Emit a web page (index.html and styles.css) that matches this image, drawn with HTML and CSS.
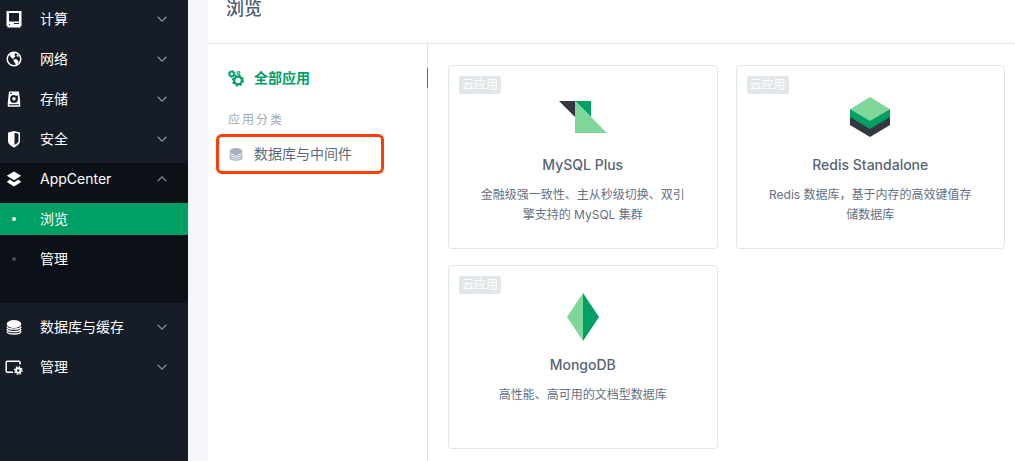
FILE: index.html
```html
<!DOCTYPE html>
<html lang="zh-CN">
<head>
    <meta charset="UTF-8">
    <meta name="viewport" content="width=device-width, initial-scale=1.0">
    <title>浏览 - AppCenter</title>
    <link rel="stylesheet" href="styles.css">
</head>
<body>
    <div class="layout">
        <nav class="sidebar">
            <a class="menu-item" href="#">
                <svg class="menu-icon" viewBox="0 0 16 16"><path fill="currentColor" fill-rule="evenodd" d="M.5 0h15v15h-1v1.500h-13V15h-1zM3 2v8.500h10V2zM3 13v1h1v-1zM8 12v1h5v-1z"/></svg>
                <span>计算</span>
                <svg class="arrow" viewBox="0 0 10 6"><path d="M.7.800L5 5.100 9.300.800"/></svg>
            </a>
            <a class="menu-item" href="#">
                <svg class="menu-icon" viewBox="0 0 16 16"><circle cx="8" cy="8" r="6.800" fill="none" stroke="currentColor" stroke-width="1.500"/><path fill="currentColor" d="M3.500 4l3-2.500 2.500.5-.5 2L9.500 5.500 8 6.500l-.5 1.500-2-1-1-1.500zM7.500 8.500l2.500-.5 2 1.500.5 1.500-2 3.500L9 12 7.500 10zM11 3l2 2-1 1-1.500-1z"/></svg>
                <span>网络</span>
                <svg class="arrow" viewBox="0 0 10 6"><path d="M.7.800L5 5.100 9.300.800"/></svg>
            </a>
            <a class="menu-item" href="#">
                <svg class="menu-icon" viewBox="0 0 16 16"><path fill="currentColor" fill-rule="evenodd" d="M3 .5h10l1.200 11V15.800H1.800v-4.300zM4 1.800v1h2v-1zM8 4a3.900 3.900 0 1 0 3.900 3.900V4.500l-2 .3C9.300 4.200 8.600 4 8 4zM3 13.300v1h10v-1z"/><circle cx="8" cy="7.800" r="1.700" fill="currentColor"/></svg>
                <span>存储</span>
                <svg class="arrow" viewBox="0 0 10 6"><path d="M.7.800L5 5.100 9.300.800"/></svg>
            </a>
            <a class="menu-item" href="#">
                <svg class="menu-icon" viewBox="0 0 16 16"><path fill="currentColor" fill-rule="evenodd" d="M8 0l6 1.500V10c0 3-3 5-6 6.500-3-1.500-6-3.500-6-6.500V1.500zM8.500 1.800V14c2.300-1.200 4-2.500 4-4.300V2.800z"/></svg>
                <span>安全</span>
                <svg class="arrow" viewBox="0 0 10 6"><path d="M.7.800L5 5.100 9.300.800"/></svg>
            </a>

            <div class="menu-group">
                <a class="menu-item" href="#">
                    <svg class="menu-icon" viewBox="0 0 16 16"><path fill="currentColor" d="M8 .5l7.200 4.300L8 9.200.8 4.800zM3.500 8.500L8 11.200l4.500-2.700L15.200 11 8 15.500.8 11z"/></svg>
                    <span>AppCenter</span>
                    <svg class="arrow" viewBox="0 0 10 6"><path d="M.7 5.100L5 .8l4.300 4.300"/></svg>
                </a>
                <a class="menu-item active" href="#">
                    <i class="dot"></i>
                    <span>浏览</span>
                </a>
                <a class="menu-item" href="#">
                    <i class="dot"></i>
                    <span>管理</span>
                </a>
            </div>

            <a class="menu-item" href="#">
                <svg class="menu-icon" viewBox="0 0 16 16"><use href="#db"/></svg>
                <span>数据库与缓存</span>
                <svg class="arrow" viewBox="0 0 10 6"><path d="M.7.800L5 5.100 9.300.800"/></svg>
            </a>
            <a class="menu-item" href="#">
                <svg class="menu-icon" viewBox="0 0 16 16"><path fill="none" stroke="currentColor" stroke-width="1.500" d="M14 5.500V3.200q0-1-1-1H1.200q-1 0-1 1v9.100q0 1 1 1H7"/><circle cx="12.300" cy="11.500" r="2.200" fill="none" stroke="currentColor" stroke-width="2"/><circle cx="12.300" cy="11.500" r="3.700" fill="none" stroke="currentColor" stroke-width="1.500" stroke-dasharray="1.450 1.456"/></svg>
                <span>管理</span>
                <svg class="arrow" viewBox="0 0 10 6"><path d="M.7.800L5 5.100 9.300.800"/></svg>
            </a>
        </nav>

        <main class="main">
            <header class="page-header">
                <h1>浏览</h1>
            </header>
            <div class="content">
                <aside class="category">
                    <a class="category-item current" href="#">
                        <svg class="category-icon" viewBox="0 0 16 16">
                            <g fill="none" stroke="currentColor">
                                <circle cx="10" cy="10.500" r="3.900" stroke-width="2.400"/>
                                <circle cx="10" cy="10.500" r="5.300" stroke-width="1.500" stroke-dasharray="2.100 2.063"/>
                                <circle cx="3.800" cy="4" r="2.300" stroke-width="1.700"/>
                                <circle cx="3.800" cy="4" r="3.400" stroke-width="1" stroke-dasharray="1.400 1.270"/>
                                <circle cx="10.500" cy="3" r="1.400" stroke-width="1.100"/>
                            </g>
                        </svg>
                        <span>全部应用</span>
                    </a>
                    <h2>应用分类</h2>
                    <a class="category-item marked" href="#">
                        <svg class="category-icon" viewBox="0 0 16 16">
                            <g id="db">
                                <ellipse cx="8" cy="5" rx="7.300" ry="4" fill="currentColor"/>
                                <path fill="none" stroke="currentColor" stroke-width="1.300" d="M.9 7.500c1 3.600 13.200 3.600 14.200 0M.9 10c1 3.600 13.200 3.600 14.200 0M.9 12.300c1 3.600 13.200 3.600 14.200 0"/>
                            </g>
                        </svg>
                        <span>数据库与中间件</span>
                    </a>
                </aside>

                <section class="apps">
                    <a class="card" href="#">
                        <span class="tag">云应用</span>
                        <svg class="logo" viewBox="0 0 48 48"><path fill="#343741" d="M0 8h16v16z"/><path fill="#00a065" d="M16 8h16v16z"/><path fill="#7ed798" d="M16 8l32 32H16z"/></svg>
                        <h3>MySQL Plus</h3>
                        <p>金融级强一致性、主从秒级切换、双引擎支持的 MySQL 集群</p>
                    </a>
                    <a class="card" href="#">
                        <span class="tag">云应用</span>
                        <svg class="logo" viewBox="0 0 48 48"><path fill="#343741" d="M4 24h40v8L24 44 4 32z"/><path fill="#00a065" d="M4 16h40v8L24 36 4 24z"/><path fill="#7ed798" d="M24 4l20 12.300L24 28 4 16.300z"/></svg>
                        <h3>Redis Standalone</h3>
                        <p>Redis 数据库，基于内存的高效键值存储数据库</p>
                    </a>
                    <a class="card" href="#">
                        <span class="tag">云应用</span>
                        <svg class="logo" viewBox="0 0 48 48"><path fill="#7ed798" d="M24 0v48L8 24z"/><path fill="#00a065" d="M24 0l16 24-16 24z"/></svg>
                        <h3>MongoDB</h3>
                        <p>高性能、高可用的文档型数据库</p>
                    </a>
                </section>
            </div>
        </main>
    </div>
</body>
</html>
```
FILE: styles.css
```css
* {
    box-sizing: border-box;
}
body {
    margin: 0;
    font-family: Inter, "Noto Sans CJK SC", sans-serif;
    font-size: 14px;
    line-height: 20px;
    color: #4c5e70;
    background-color: #f5f6fa;
}
a {
    color: inherit;
    text-decoration: none;
}
h1, h2, h3, p {
    margin: 0;
}
.layout {
    display: flex;
    min-height: 100vh;
}

/* sidebar */
.sidebar {
    display: flex;
    flex-direction: column;
    flex-shrink: 0;
    gap: 8px;
    width: 188px;
    padding-top: 3px;
    color: #fff;
    background-color: #161d26;
}
.menu-item {
    display: flex;
    align-items: center;
    height: 32px;
    padding: 0 21px 0 6px;
}
.menu-icon {
    width: 16px;
    height: 16px;
    margin-right: 18px;
    overflow: visible;
}
.arrow {
    width: 10px;
    height: 6px;
    margin-left: auto;
    overflow: visible;
    fill: none;
    stroke: #8491a0;
    stroke-width: 1.3;
}
.menu-group {
    display: flex;
    flex-direction: column;
    gap: 8px;
    padding-bottom: 28px;
    background-color: #0b1117;
}
.dot {
    width: 4px;
    height: 4px;
    margin: 0 24px 0 6px;
    border-radius: 50%;
    background-color: #4a5059;
}
.active {
    background-color: #00a065;
}
.active .dot {
    background-color: #fff;
}

/* main */
.main {
    display: flex;
    flex-direction: column;
    flex: 1;
    min-width: 0;
    margin-left: 20px;
    background-color: #fff;
}
.page-header {
    height: 44px;
    padding-left: 18px;
    border-bottom: 1px solid #dfe6e8;
}
.page-header h1 {
    font-size: 18px;
    font-weight: 500;
    line-height: 18px;
}
.content {
    display: flex;
    flex: 1;
}
.category {
    flex-shrink: 0;
    width: 220px;
    padding: 24px 0 0 8px;
    border-right: 1px solid #dfe6e8;
}
.category-item {
    position: relative;
    display: flex;
    align-items: center;
    padding-left: 12px;
}
.category-icon {
    width: 16px;
    height: 16px;
    margin-right: 10px;
    overflow: visible;
}
.current {
    font-weight: 700;
    color: #00a065;
}
.current::after {
    content: "";
    position: absolute;
    top: 0;
    right: -1px;
    width: 1px;
    height: 20px;
    background-color: #00a065;
}
.category h2 {
    margin: 22px 0 4px 12px;
    font-size: 12px;
    font-weight: 400;
    letter-spacing: 2px;
    color: #9fabb9;
}
.marked {
    width: 168px;
    height: 40px;
    padding-left: 9px;
    color: #5a6878;
    border: 3px solid #ff3c05;
    border-radius: 6px;
}
.marked .category-icon {
    padding: 1px;
    color: #a6b0bf;
}

/* app cards */
.apps {
    display: grid;
    grid-template-columns: 1fr 1fr;
    align-content: start;
    gap: 16px 18px;
    flex: 1;
    padding: 21px 10px 12px 20px;
}
.card {
    position: relative;
    display: flex;
    flex-direction: column;
    align-items: center;
    min-height: 184px;
    padding: 27px 30px 20px;
    text-align: center;
    border: 1px solid #dfe6e8;
    border-radius: 4px;
}
.tag {
    position: absolute;
    top: 10px;
    left: 10px;
    padding: 0 3px;
    font-size: 12px;
    line-height: 18px;
    color: #fff;
    background-color: #e0e6e9;
    border-radius: 2px;
}
.logo {
    width: 48px;
    height: 48px;
}
.card h3 {
    margin: 14px 0 10px;
    font-size: 14px;
    font-weight: 500;
    color: #566476;
}
.card p {
    font-size: 12px;
    color: #647083;
}
```
